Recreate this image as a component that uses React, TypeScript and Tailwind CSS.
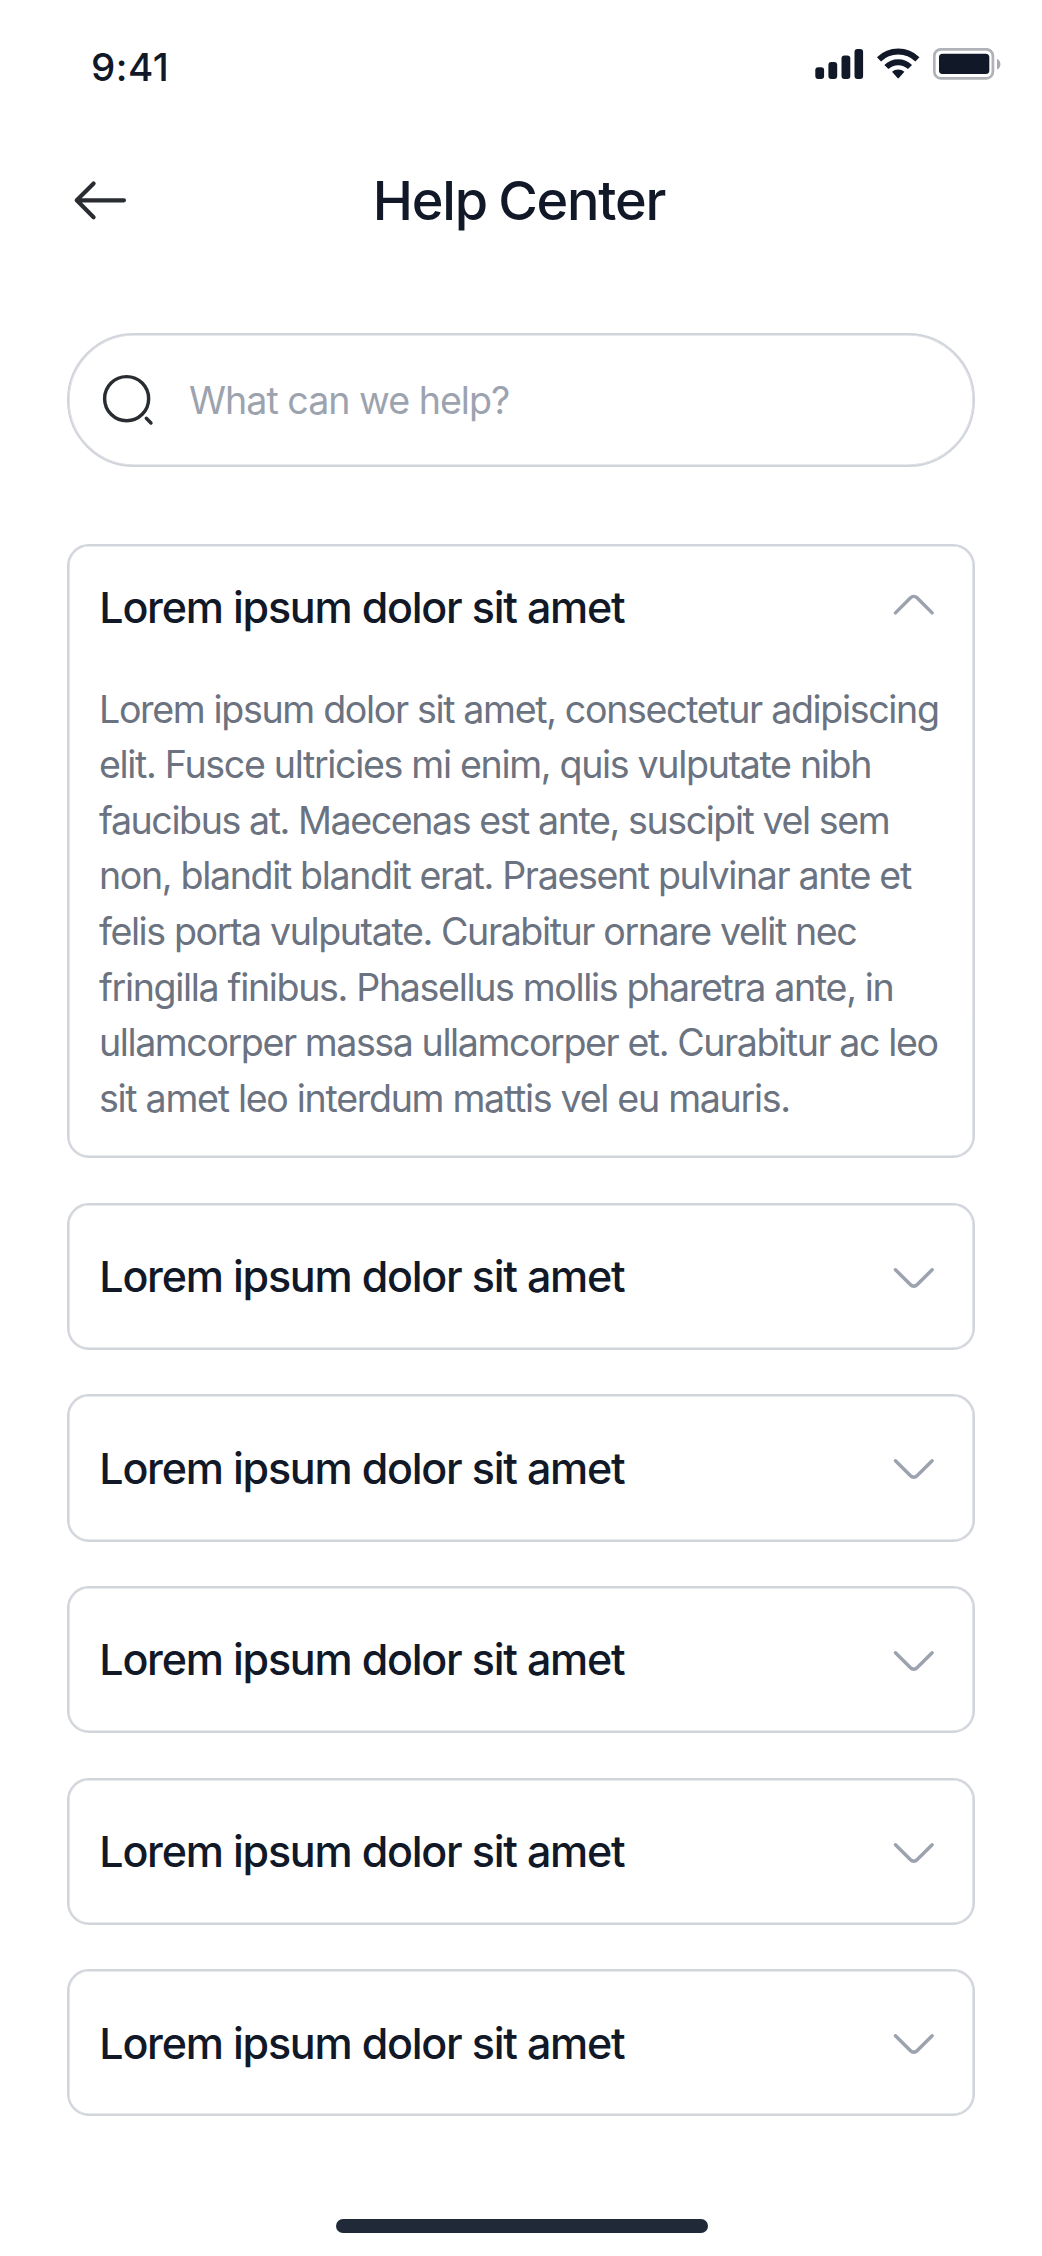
import React, { useState } from "react";

const OUTLINE = "border-2 border-[#d1d5db] shadow-[inset_0_0_0_0.6px_#d1d5db]";

const PARAGRAPH = [
  { text: "Lorem ipsum dolor sit amet, consectetur adipiscing", tracking: "tracking-[-1.35px]" },
  { text: "elit. Fusce ultricies mi enim, quis vulputate nibh", tracking: "tracking-[-1.33px]" },
  { text: "faucibus at. Maecenas est ante, suscipit vel sem", tracking: "tracking-[-1.43px]" },
  { text: "non, blandit blandit erat. Praesent pulvinar ante et", tracking: "tracking-[-1.36px]" },
  { text: "felis porta vulputate. Curabitur ornare velit nec", tracking: "tracking-[-1.4px]" },
  { text: "fringilla finibus. Phasellus mollis pharetra ante, in", tracking: "tracking-[-1.34px]" },
  { text: "ullamcorper massa ullamcorper et. Curabitur ac leo", tracking: "tracking-[-1.42px]" },
  { text: "sit amet leo interdum mattis vel eu mauris.", tracking: "tracking-[-1.3px]" },
];

function StatusBar() {
  return (
    <header className="flex h-[134px] shrink-0 items-start justify-between pl-[91px] pr-[40px] pt-[44px] text-[#111827]">
      <span className="text-[38.6px] leading-[46px] font-medium tracking-[0.5px]">9:41</span>
      <svg width="187" height="32" viewBox="815 48 187 32" className="mt-[4px]" fill="currentColor" aria-hidden="true">
        <rect x="815.3" y="67.3" width="8.8" height="11.7" rx="3" />
        <rect x="828.4" y="62" width="8.8" height="17" rx="3" />
        <rect x="841.5" y="55.5" width="8.8" height="23.5" rx="3" />
        <rect x="854.5" y="49" width="8.6" height="30" rx="3" />
        <g fill="none" stroke="currentColor" strokeWidth="5.8">
          <path d="M879 59.3a27.5 27.5 0 0 1 38.4 0" />
          <path d="M886.4 67a17 17 0 0 1 23.6 0" />
        </g>
        <path d="M892 71.8a9.4 9.4 0 0 1 12.4 0l-5.3 6a1.2 1.2 0 0 1-1.8 0z" />
        <rect x="934.3" y="49.3" width="58.6" height="29" rx="6.5" fill="none" stroke="#b0b2b8" strokeWidth="2.7" />
        <rect x="939" y="53.7" width="50.3" height="20.4" rx="3.6" />
        <path d="M997 58.8a6 6 0 0 1 0 10.8z" fill="#a9abb1" />
      </svg>
    </header>
  );
}

function Chevron({ open }: { open: boolean }) {
  return (
    <svg width="55.6" height="55.6" viewBox="0 0 24 24" fill="none" stroke="#9ca3af" strokeWidth="1.5" strokeLinecap="round" strokeLinejoin="round" className={open ? "-mt-[4px] shrink-0" : "mt-[1px] shrink-0"} aria-hidden="true">
      <path d={open ? "M19.92 15.05 13.4 8.53c-.77-.77-2.03-.77-2.8 0l-6.52 6.52" : "m19.92 8.95-6.52 6.52c-.77.77-2.03.77-2.8 0L4.08 8.95"} />
    </svg>
  );
}

function Item({ open, onToggle }: { open: boolean; onToggle: () => void }) {
  return (
    <section className={`${OUTLINE} shrink-0 rounded-[22px] ${open ? "h-[613.9px] pt-[33px]" : "h-[147.2px] pt-[43px]"}`}>
      <button onClick={onToggle} aria-expanded={open} className="flex w-full items-center justify-between pl-[30.3px] pr-[31px] text-left">
        <span className="text-[43px] leading-[56px] font-medium tracking-[-1.23px] whitespace-nowrap text-[#111827]">Lorem ipsum dolor sit amet</span>
        <Chevron open={open} />
      </button>
      {open && (
        <p className="pt-[46.3px] pl-[30px] text-[37.6px] leading-[55.6px] whitespace-nowrap text-[#6b7280]">
          {PARAGRAPH.map(({ text, tracking }) => (
            <span key={text} className={`block ${tracking}`}>{text}</span>
          ))}
        </p>
      )}
    </section>
  );
}

export default function App() {
  const [openIndex, setOpenIndex] = useState(0);
  return (
    <main className="flex h-[2256px] w-[1042px] flex-col bg-white font-['Inter',sans-serif]">
      <StatusBar />
      <div className="grid h-[133px] shrink-0 grid-cols-[67px_1fr_67px] items-center px-[67px]">
        <button aria-label="Back">
          <svg width="66.7" height="66.7" viewBox="0 0 24 24" fill="none" stroke="#292d32" strokeWidth="1.5" strokeLinecap="round" strokeLinejoin="round">
            <path d="M9.57 5.93 3.5 12l6.07 6.07M20.5 12H3.67" />
          </svg>
        </button>
        <h1 className="pr-[4px] text-center text-[54px] leading-[66px] font-medium tracking-[-1.2px] [word-spacing:-2px] text-[#111827]">Help Center</h1>
      </div>
      <label className={`${OUTLINE} mx-[67px] mt-[66.4px] flex h-[133.3px] shrink-0 items-center rounded-full pl-[31px]`}>
        <svg width="55.6" height="55.6" viewBox="0 0 24 24" fill="none" stroke="#292d32" strokeWidth="1.5" strokeLinecap="round" strokeLinejoin="round" className="shrink-0" aria-hidden="true">
          <circle cx="11.5" cy="11.5" r="9.5" />
          <path d="m22 22-2-2" />
        </svg>
        <span className="ml-[33.4px] pt-[1px] text-[37.6px] leading-[56px] tracking-[-0.98px] text-[#9ca3af]">What can we help?</span>
      </label>
      <div className="mx-[67px] mt-[77.7px] flex shrink-0 flex-col gap-[44.45px]">
        {[0, 1, 2, 3, 4, 5].map((i) => (
          <Item key={i} open={openIndex === i} onToggle={() => setOpenIndex(openIndex === i ? -1 : i)} />
        ))}
      </div>
      <div className="mt-[102.5px] ml-[336px] h-[14.5px] w-[372.3px] shrink-0 rounded-full bg-[#1f2937]" />
    </main>
  );
}
